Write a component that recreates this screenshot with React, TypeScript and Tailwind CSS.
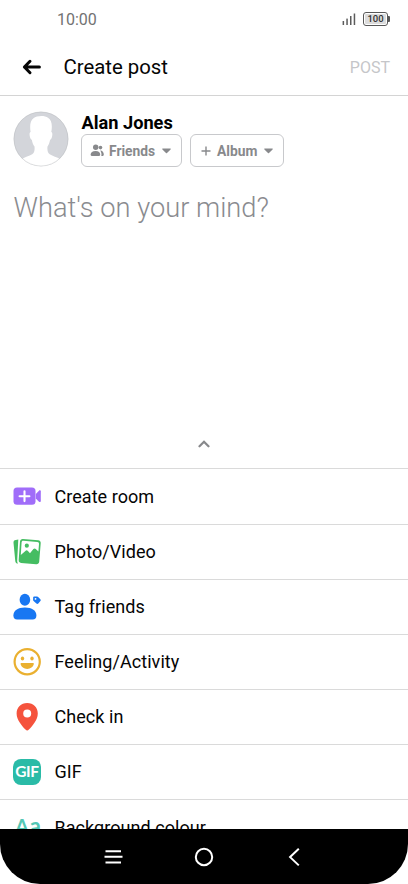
import React from "react";

function Signal() {
  return (
    <svg width="14" height="12" viewBox="0 0 14 12" fill="#5c5c5c">
      <rect x="0.6" y="8" width="1.500" height="4" />
      <rect x="4.300" y="5.600" width="1.500" height="6.400" />
      <rect x="8" y="3" width="1.500" height="9" />
      <rect x="11.700" y="0.500" width="1.500" height="11.500" />
    </svg>
  );
}

function Battery() {
  return (
    <div className="flex items-center">
      <div className="flex h-[14px] w-[25px] items-center justify-center rounded-[3px] border border-[#585858] bg-white p-px">
        <span className="flex h-full w-full items-center justify-center rounded-[1px] bg-[#dcdcdc] text-[9.500px] leading-none font-medium text-[#333]">
          100
        </span>
      </div>
      <div className="h-[6px] w-[2px] rounded-r-[1px] bg-[#585858]" />
    </div>
  );
}

function Avatar() {
  return (
    <svg width="56" height="56" viewBox="0 0 56 56" className="shrink-0">
      <defs>
        <clipPath id="avatarCircle">
          <circle cx="28" cy="28" r="27.300" />
        </clipPath>
      </defs>
      <g clipPath="url(#avatarCircle)">
        <rect width="56" height="56" fill="#d3d5da" />
        <path
          d="M17.600 21C16.600 15 17.200 9.500 20.500 7.200 23.500 4.600 31.500 3.800 35 6.800c3.800 2.200 4.500 8 3.300 14.200 1.300.3 1.200 2.800.7 4.800-.4 1.800-1 2.800-1.900 2.900-.5 3-1.500 5.300-2.600 6.900-.4 3.200.2 6.200 2.200 7.700 3 2.100 7.200 2.600 10.800 4.900V58H8.500V48.200c3.500-2.400 7.700-2.800 10.700-4.900 2.100-1.500 2.700-4.500 2.300-7.700-1.200-1.600-2.200-3.900-2.700-6.900-.9-.1-1.500-1.100-1.900-2.900-.5-2-.6-4.500.7-4.800Z"
          fill="#fff"
        />
      </g>
      <circle cx="28" cy="28" r="27" fill="none" stroke="#b5b6b9" strokeWidth="0.700" strokeOpacity="0.600" />
    </svg>
  );
}

function FriendsGlyph() {
  return (
    <svg width="14" height="13" viewBox="0 0 14 13" fill="#88898c">
      <circle cx="5.700" cy="3.200" r="2.700" />
      <circle cx="10.500" cy="3.600" r="1.800" />
      <path d="M.6 10.600C.6 8.400 2.500 6.900 5.600 6.900s4.600 1.500 4.600 3.700c0 .9-.4 1.300-1.100 1.300H1.700C1 11.900.6 11.500.6 10.600Z" />
      <path d="M10.200 6.400c2.300 0 3.600 2 3.600 4.100 0 .9-.4 1.400-1 1.400h-1.500c.5-2 .1-3.800-1.100-5.500Z" />
    </svg>
  );
}

function Caret() {
  return (
    <svg width="9" height="6" viewBox="0 0 9 6">
      <path d="M.7.6h7.600c.4 0 .6.500.3.800L5 5.100a.7.7 0 0 1-1 0L.4 1.400C.1 1.100.3.6.7.6Z" fill="#88898c" />
    </svg>
  );
}

function RoomIcon() {
  return (
    <svg width="28" height="28" viewBox="0 0 28 28">
      <rect x="0.500" y="5.500" width="22" height="17.300" rx="3.500" fill="#a06df9" />
      <path d="M22.800 12 26 8.700c.7-.7 1.800-.3 1.800.6v9.800c0 .9-1.100 1.300-1.800.6l-3.200-3.300Z" fill="#a06df9" />
      <path d="M11.500 9.300v9.800M6.600 14.200h9.800" stroke="#fff" strokeWidth="2.100" strokeLinecap="round" />
    </svg>
  );
}

function PhotoIcon() {
  return (
    <svg width="28" height="28" viewBox="0 0 28 28">
      <path d="M5.300 1.600 2.800 1.900C1.200 2.100.4 3.100.5 4.700l1.800 18.500c.2 1.600 1.200 2.300 2.700 2.400-.7-.9-.9-1.800-.8-3Z" fill="#45bd62" />
      <path d="M9.900.9 25.200 2.300c1.700.2 2.700 1.300 2.500 3L26.200 23.700c-.2 1.700-1.300 2.600-3 2.500L8.100 25c-1.700-.2-2.500-1.200-2.400-2.900L7 3.400C7.200 1.700 8.200.8 9.900.9Z" fill="#45bd62" />
      <path d="M10.300 2.700 24.300 3.900c1.200.1 1.800.8 1.700 2l-.6 7.600-2.600-2.500c-.8-.8-1.600-.8-2.400 0L17 15.300l-2.300-2.500c-.8-.7-1.600-.7-2.300.1l-4.600 4.200L8.600 4.300c.1-1.100.7-1.700 1.700-1.600Z" fill="#fff" />
      <circle cx="13.800" cy="7.700" r="2.100" fill="#45bd62" />
    </svg>
  );
}

function TagIcon() {
  return (
    <svg width="28" height="28" viewBox="0 0 28 28" fill="#1877f2">
      <ellipse cx="11.900" cy="6.800" rx="5.300" ry="6" />
      <path d="M.4 22.500c0-4.800 4.300-8 11.500-8s11.500 3.200 11.500 8c0 2.600-1.300 3.900-3.700 3.900H4.100C1.700 26.400.4 25.100.4 22.500Z" />
      <path fillRule="evenodd" d="M20.200 4.100c.1-.3.500-.6.900-.6l3 .1c.4 0 .8.200 1 .5l2.300 2.100c.5.600.5 1.300 0 1.900l-2.100 2.300c-.6.600-1.300.7-1.900.1l-2.800-2.500c-.4-.3-.6-.8-.5-1.200Zm2.300.9a.9.900 0 1 0 .1 1.800.9.900 0 0 0-.1-1.800Z" />
    </svg>
  );
}

function FeelingIcon() {
  return (
    <svg width="28" height="28" viewBox="0 0 28 28">
      <circle cx="14.200" cy="13.700" r="12.600" fill="none" stroke="#eab030" strokeWidth="2.200" />
      <ellipse cx="9.500" cy="10.500" rx="1.700" ry="2" fill="#eab030" />
      <ellipse cx="19" cy="10.500" rx="1.700" ry="2" fill="#eab030" />
      <path d="M8.700 15h11c.9 0 1.300.5 1.100 1.300-.8 2.700-3.200 4.700-6.600 4.700s-5.800-2-6.600-4.700c-.2-.8.200-1.300 1.100-1.300Z" fill="#eab030" />
    </svg>
  );
}

function PinIcon() {
  return (
    <svg width="28" height="28" viewBox="0 0 28 28">
      <path
        fillRule="evenodd"
        d="M14.200.1C20.400.1 24.800 4.500 24.800 10.400c0 6.400-5.400 12.400-8.900 16.200-1.100 1.200-2.300 1.200-3.400 0C9 22.800 3.600 16.800 3.600 10.400 3.600 4.500 8 .1 14.200.1Zm0 6.400a4 4 0 1 0 0 8 4 4 0 0 0 0-8Z"
        fill="#f5533d"
      />
    </svg>
  );
}

function GifIcon() {
  return (
    <div className="flex size-[28px] items-center justify-center">
      <div className="flex h-[26px] w-[28px] items-center justify-center rounded-[8px] bg-[#2abba7] font-[Lato,sans-serif] text-[15.500px] leading-none font-bold tracking-[-0.300px] text-white">
        GIF
      </div>
    </div>
  );
}

function ColourIcon() {
  return (
    <div className="flex h-[28px] w-[28px] items-baseline justify-between pt-[2px] pl-[2px] font-[Lato,sans-serif] leading-[22px] font-bold text-[#54c7b5]">
      <span className="text-[20px]">A</span>
      <span className="text-[22px]">a</span>
    </div>
  );
}

const options = [
  { label: "Create room", icon: <RoomIcon /> },
  { label: "Photo/Video", icon: <PhotoIcon /> },
  { label: "Tag friends", icon: <TagIcon /> },
  { label: "Feeling/Activity", icon: <FeelingIcon /> },
  { label: "Check in", icon: <PinIcon /> },
  { label: "GIF", icon: <GifIcon /> },
  { label: "Background colour", icon: <ColourIcon /> },
];

export default function App() {
  return (
    <div className="flex h-[884px] w-[408px] flex-col overflow-hidden bg-white font-[Roboto,sans-serif] text-[#050505]">
      <div className="flex h-[38px] shrink-0 items-center justify-between pr-[18px] pl-[57px]">
        <span className="pt-px text-[16px] leading-5 text-[#727272]">10:00</span>
        <div className="flex items-center gap-[7px]">
          <Signal />
          <Battery />
        </div>
      </div>

      <header className="flex h-[58px] shrink-0 items-center border-b border-[#d4d4d4] pr-[18px] pl-[22px]">
        <svg width="20" height="16" viewBox="0 0 20 16" fill="none" stroke="#050505" strokeWidth="3" strokeLinecap="round" strokeLinejoin="round">
          <path d="M8 2.300 2.400 8 8 13.700M2.400 8h15" />
        </svg>
        <h1 className="ml-[21.500px] pt-px text-[20.350px] leading-6 font-normal">Create post</h1>
        <span className="ml-auto pt-[2px] text-[16px] leading-5 text-[#c5c6c9]">POST</span>
      </header>

      <main className="flex h-[372.450px] shrink-0 flex-col">
        <div className="flex pt-[15px] pl-[13px]">
          <Avatar />
          <div className="ml-[12px] flex flex-col">
            <span className="pl-[0.500px] text-[18.200px] leading-[23px] font-bold text-black">Alan Jones</span>
            <div className="flex gap-2">
              <button className="flex h-[33px] w-[101px] items-center rounded-[6px] border border-[#c8c9cc] pl-[8px] text-[13.800px] font-bold text-[#88898c]">
                <FriendsGlyph />
                <span className="mr-[6.500px] ml-[5px] pt-px">Friends</span>
                <Caret />
              </button>
              <button className="flex h-[33px] w-[94px] items-center rounded-[6px] border border-[#c8c9cc] pl-[10px] text-[13.800px] font-bold text-[#88898c]">
                <svg width="10" height="10" viewBox="0 0 10 10" stroke="#88898c" strokeWidth="1.400">
                  <path d="M5 .5v9M.5 5h9" />
                </svg>
                <span className="mr-[6.500px] ml-[6px] pt-px">Album</span>
                <Caret />
              </button>
            </div>
          </div>
        </div>
        <p className="mt-[23px] pl-[13.500px] text-[27.250px] leading-9 font-light text-[#8a8b8f]">What's on your mind?</p>
        <div className="mt-auto flex justify-center pb-[20px]">
          <svg width="12" height="8" viewBox="0 0 12 8" fill="none" stroke="#88898c" strokeWidth="2.200" strokeLinecap="round">
            <path d="M1.500 6.300 6 1.800l4.500 4.500" />
          </svg>
        </div>
      </main>

      <ul className="h-[360.550px] shrink-0 overflow-hidden">
        {options.map((option) => (
          <li key={option.label} className="flex h-[55.100px] items-center border-t border-[#dadada] pl-[13px]">
            {option.icon}
            <span className="ml-[13.500px] pt-px text-[18px] leading-6 tracking-[0.050px]">{option.label}</span>
          </li>
        ))}
      </ul>

      <nav className="flex h-[55px] shrink-0 rounded-b-[40px] bg-black pt-[17px]">
        <svg width="408" height="22" viewBox="0 0 408 22" fill="none" stroke="#fff" strokeWidth="2">
          <path d="M105.500 5.200h15.500M104.500 10.700h18M105.500 16.400h15.500" />
          <circle cx="204" cy="11" r="8.200" />
          <path d="m298.800 2.700-8.700 8.400 8.700 8.300" />
        </svg>
      </nav>
    </div>
  );
}
